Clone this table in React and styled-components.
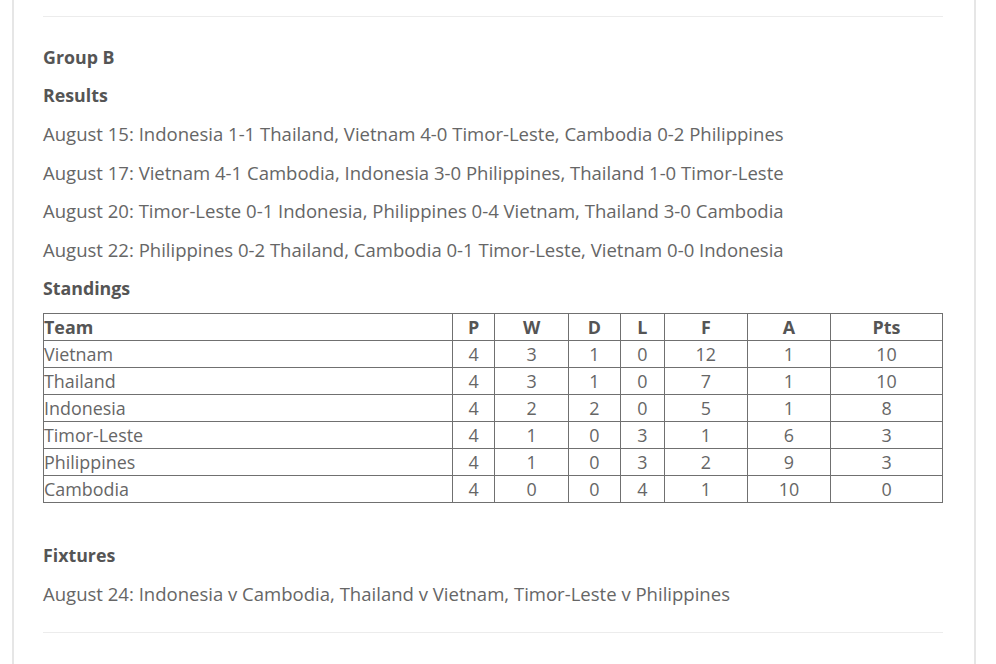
import React from 'react';
import styled, { createGlobalStyle } from 'styled-components'

const GlobalStyle = createGlobalStyle`
  body {
    margin: 0;
    background: #fff;
    font-family: "Open Sans", "Liberation Sans", sans-serif;
  }
`

const Pagina = styled.div`
  margin-left: 12px;
  width: 964px;
  min-height: 664px;
  box-sizing: border-box;
  border-left: 2px solid #e6e6e6;
  border-right: 2px solid #e6e6e6;
  padding: 16px 31px 0 29px;
`
const Linha = styled.hr`
  border: none;
  border-top: 1px solid #ececec;
  margin: ${props => props.topo || 0}px 0 0;
`
const Titulo = styled.p`
  font-size: 17.8px;
  font-weight: 700;
  color: #555;
  line-height: 27px;
  margin: ${props => props.topo || 0}px 0 11px;
`
const Texto = styled.p`
  font-size: 18.55px;
  color: #666;
  line-height: 27px;
  margin: 0 0 11.7px;
`
const Tabela = styled.table`
  width: 900px;
  border-collapse: collapse;
  margin: 1px 0 39px;
  font-size: 17.9px;
  color: #666;
`
const Celula = styled.td`
  border: 1px solid #707070;
  padding: 0;
  height: 26px;
  line-height: 26px;
  text-align: ${props => props.esq ? 'left' : 'center'};
  width: ${props => props.largura}px;
`
const Cabecalho = styled(Celula).attrs({ as: 'th' })`
  font-weight: 700;
  color: #555;
`

const colunas = [
  { nome: 'Team', largura: 412 },
  { nome: 'P', largura: 42 },
  { nome: 'W', largura: 73 },
  { nome: 'D', largura: 52 },
  { nome: 'L', largura: 43 },
  { nome: 'F', largura: 83 },
  { nome: 'A', largura: 83 },
  { nome: 'Pts', largura: 112 },
]

const times = [
  ['Vietnam', 4, 3, 1, 0, 12, 1, 10],
  ['Thailand', 4, 3, 1, 0, 7, 1, 10],
  ['Indonesia', 4, 2, 2, 0, 5, 1, 8],
  ['Timor-Leste', 4, 1, 0, 3, 1, 6, 3],
  ['Philippines', 4, 1, 0, 3, 2, 9, 3],
  ['Cambodia', 4, 0, 0, 4, 1, 10, 0],
]

const resultados = [
  'August 15: Indonesia 1-1 Thailand, Vietnam 4-0 Timor-Leste, Cambodia 0-2 Philippines',
  'August 17: Vietnam 4-1 Cambodia, Indonesia 3-0 Philippines, Thailand 1-0 Timor-Leste',
  'August 20: Timor-Leste 0-1 Indonesia, Philippines 0-4 Vietnam, Thailand 3-0 Cambodia',
  'August 22: Philippines 0-2 Thailand, Cambodia 0-1 Timor-Leste, Vietnam 0-0 Indonesia',
]

export default function App() {
  return (
    <Pagina>
      <GlobalStyle />
      <Linha />
      <Titulo topo={27}>Group B</Titulo>
      <Titulo>Results</Titulo>
      {resultados.map((r, i) => <Texto key={i}>{r}</Texto>)}
      <Titulo>Standings</Titulo>
      <Tabela>
        <thead>
          <tr>
            {colunas.map((c, i) => (
              <Cabecalho key={c.nome} esq={i === 0} largura={c.largura}>{c.nome}</Cabecalho>
            ))}
          </tr>
        </thead>
        <tbody>
          {times.map(linha => (
            <tr key={linha[0]}>
              {linha.map((v, i) => (
                <Celula key={i} esq={i === 0} largura={colunas[i].largura}>{v}</Celula>
              ))}
            </tr>
          ))}
        </tbody>
      </Tabela>
      <Titulo>Fixtures</Titulo>
      <Texto>August 24: Indonesia v Cambodia, Thailand v Vietnam, Timor-Leste v Philippines</Texto>
      <Linha topo={25} />
    </Pagina>
  );
}
